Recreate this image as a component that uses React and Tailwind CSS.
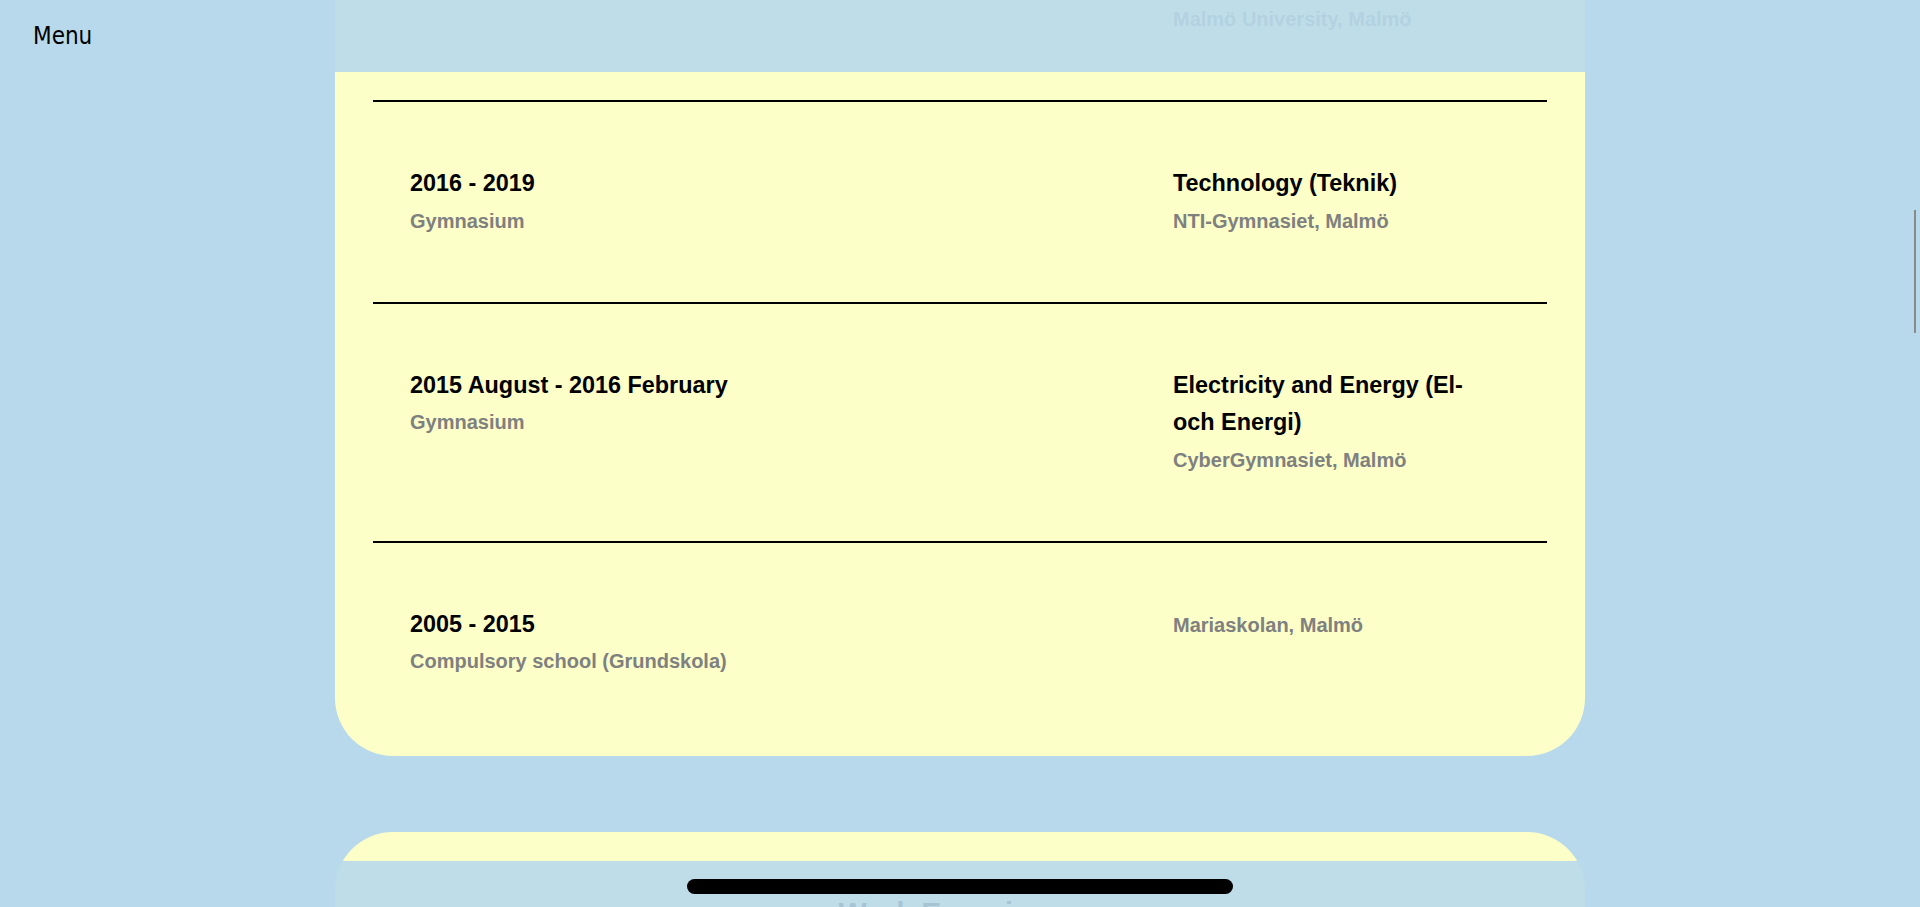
import React from "react";

function Rule() {
  return <div className="h-[2px] bg-black" />;
}

function Entry({ date, kind, title, place }) {
  return (
    <div className="flex pb-[66px] pl-[37px] pr-[54px] pt-[63px]">
      <div className="flex-1">
        <h3 className="text-[23.4px] font-bold leading-[37.5px] text-black">{date}</h3>
        <p className="mt-[3px] text-[20px] font-bold leading-[30px] text-[#808080]">{kind}</p>
      </div>
      <div className="w-[320px] shrink-0">
        {title ? (
          <>
            <h3 className="text-[23.4px] font-bold leading-[37.5px] text-black">{title}</h3>
            <p className="mt-[3px] text-[20px] font-bold leading-[30px] text-[#808080]">{place}</p>
          </>
        ) : (
          <p className="mt-[4px] text-[20px] font-bold leading-[30px] text-[#808080]">{place}</p>
        )}
      </div>
    </div>
  );
}

export default function App() {
  return (
    <div className="relative h-[907px] w-full overflow-hidden bg-[#b8d9eb] font-['Liberation_Sans',Arial,sans-serif]">
      <div className="mx-auto -mt-[137px] w-[1250px] rounded-[58px] bg-[#fcffc8] px-[38px] pb-[14px]">
        <Entry
          date="2019 - 2022"
          kind="University"
          title="Computer Science and Application Development"
          place="Malmö University, Malmö"
        />
        <Rule />
        <Entry
          date="2016 - 2019"
          kind="Gymnasium"
          title="Technology (Teknik)"
          place="NTI-Gymnasiet, Malmö"
        />
        <Rule />
        <Entry
          date="2015 August - 2016 February"
          kind="Gymnasium"
          title="Electricity and Energy (El-och Energi)"
          place="CyberGymnasiet, Malmö"
        />
        <Rule />
        <Entry
          date="2005 - 2015"
          kind="Compulsory school (Grundskola)"
          place="Mariaskolan, Malmö"
        />
      </div>

      <div className="mx-auto mt-[76px] h-[400px] w-[1250px] rounded-t-[58px] bg-[#fcffc8] pt-[58px]">
        <h2 className="text-center text-[30px] font-bold leading-[45px] text-black">Work Experience</h2>
      </div>

      {/* top fade bar */}
      <div className="absolute left-[335px] top-0 h-[72px] w-[1250px] bg-[#b8d9eb]/90" />

      {/* bottom bar with handle */}
      <div className="absolute bottom-0 left-[335px] flex h-[46px] w-[1250px] justify-center bg-[#b8d9eb]/90 pt-[18px]">
        <div className="h-[15px] w-[546px] rounded-full bg-black" />
      </div>

      {/* menu */}
      <div className="absolute left-[33px] top-[24px] font-['DejaVu_Sans_Condensed','DejaVu_Sans',sans-serif] font-stretch-condensed text-[24px] leading-[24px] text-black">
        Menu
      </div>

      {/* scroll indicator */}
      <div className="absolute left-[1914px] top-[210px] h-[123px] w-[2px] bg-[#8a8a8a]" />
    </div>
  );
}
